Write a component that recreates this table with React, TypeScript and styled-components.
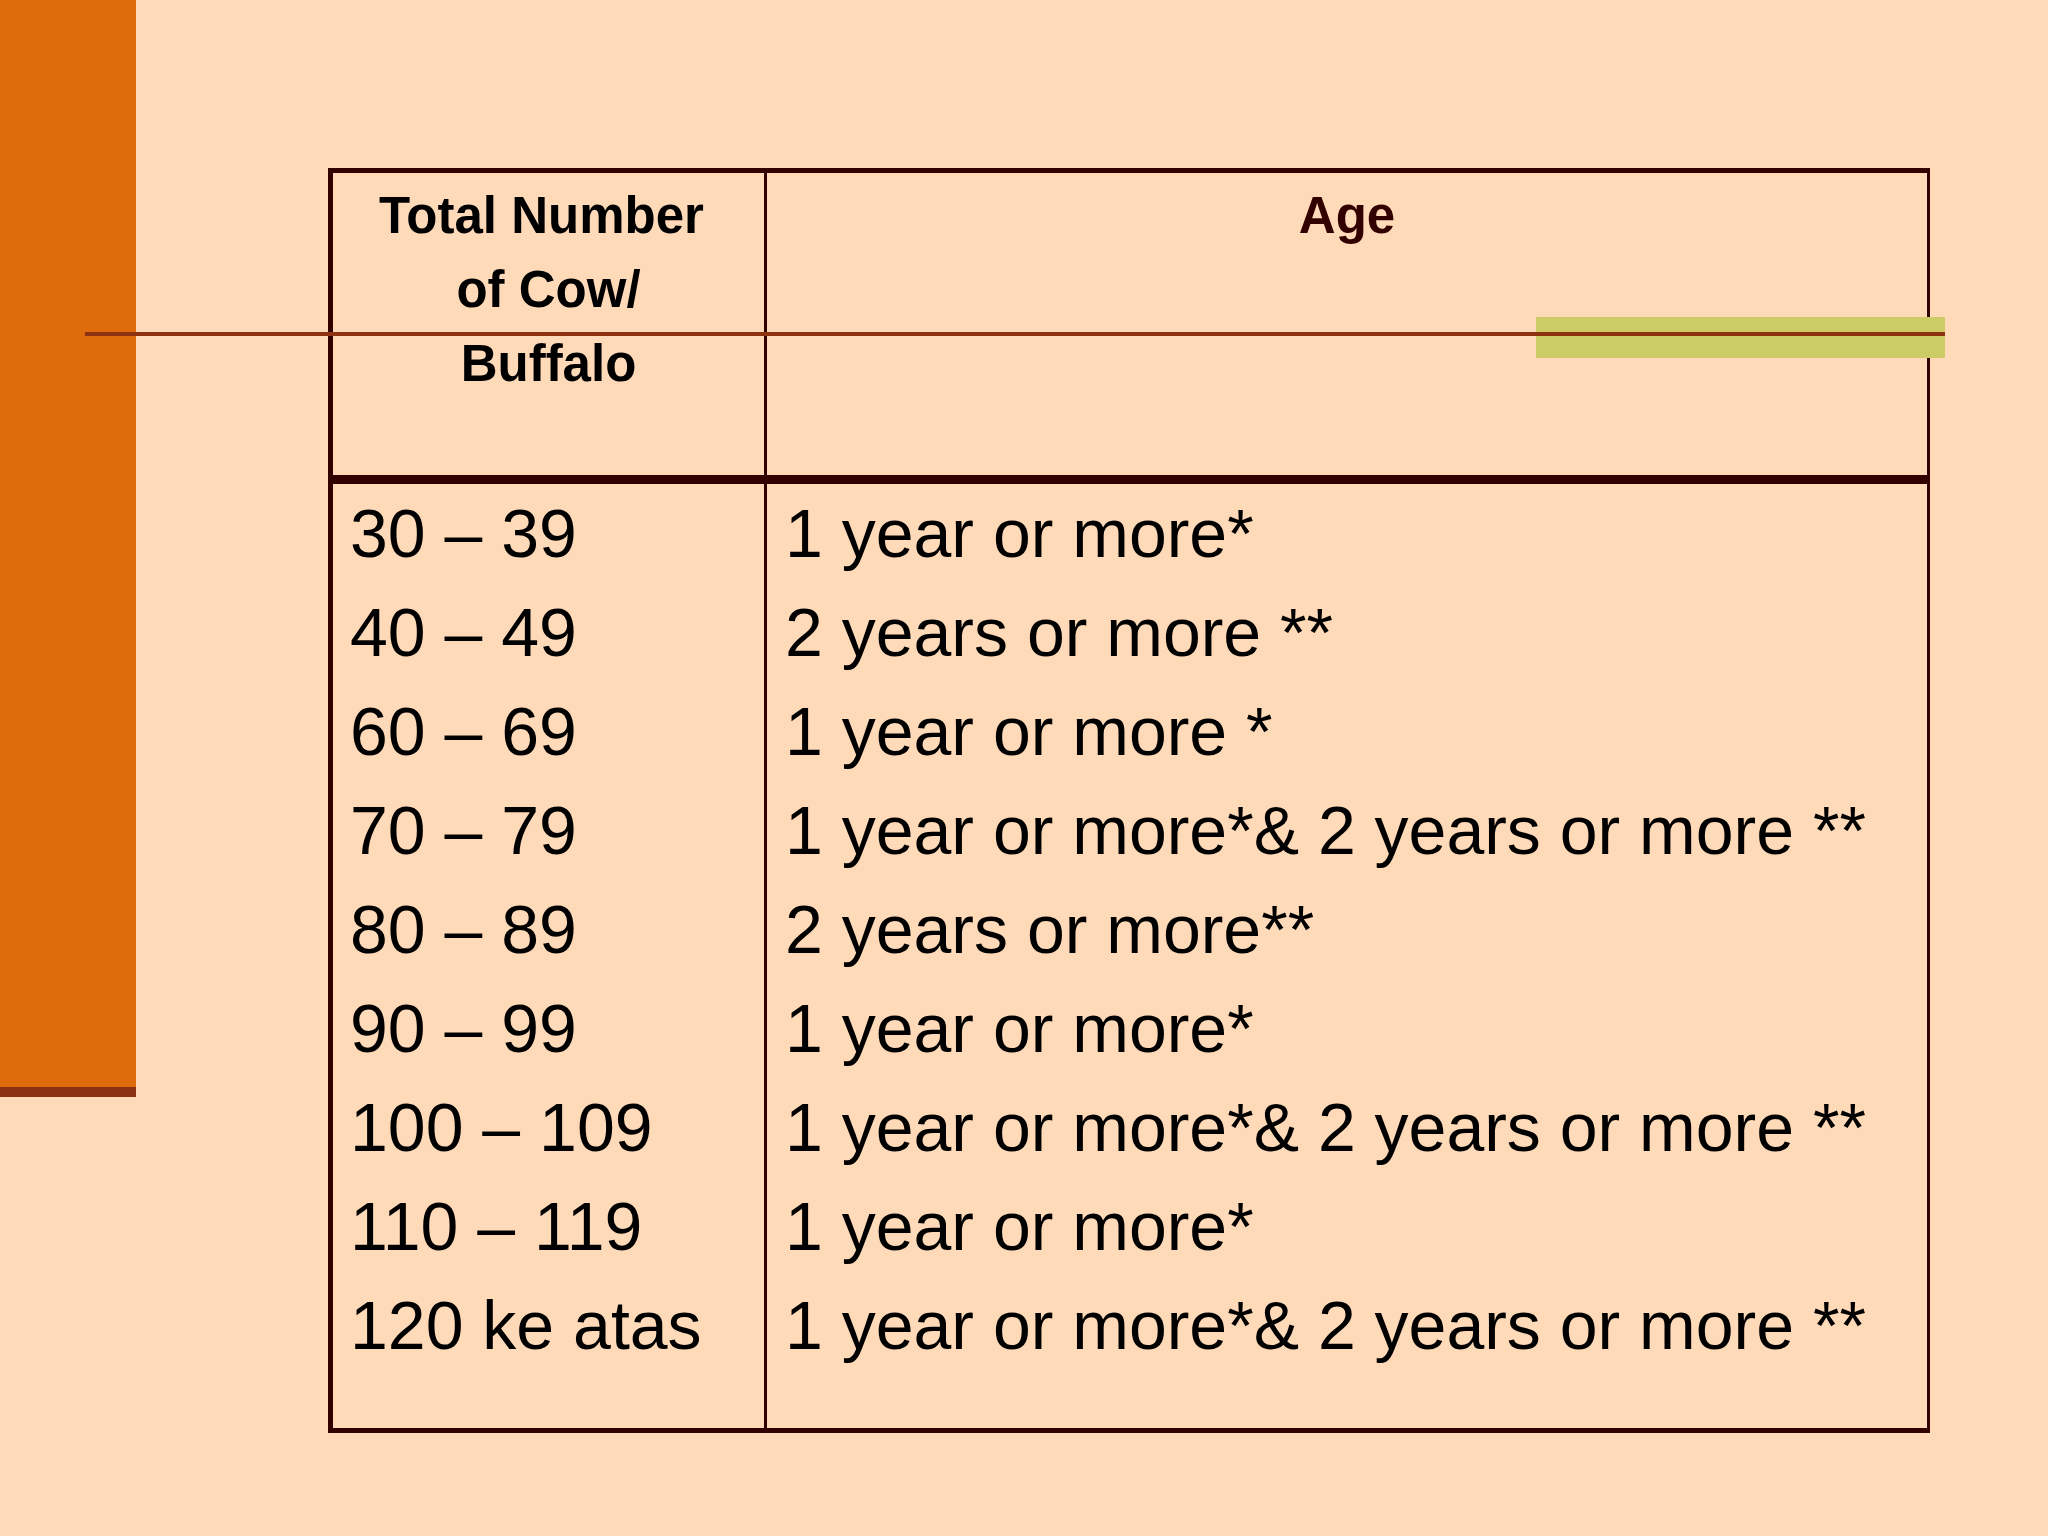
import React from "react";
import styled, { createGlobalStyle } from "styled-components";

const ranges = [
  "30 – 39",
  "40 – 49",
  "60 – 69",
  "70 – 79",
  "80 – 89",
  "90 – 99",
  "100 – 109",
  "110 – 119",
  "120 ke atas",
];

const ages = [
  "1 year or more*",
  "2 years or more **",
  "1 year or more *",
  "1 year or more*& 2 years or more **",
  "2 years or more**",
  "1 year or more*",
  "1 year or more*& 2 years or more **",
  "1 year or more*",
  "1 year or more*& 2 years or more **",
];

const App = () => {
  return (
    <Slide>
      <GlobalStyle />
      <SideBar />
      <Main>
        <Table>
          <HeaderRow>
            <HeaderCell $divider>
              {"Total Number\u00a0"}
              <br />
              of Cow/
              <br />
              Buffalo
            </HeaderCell>
            <HeaderCell $tone="#330000">Age</HeaderCell>
          </HeaderRow>
          <Body>
            <BodyColumn $divider>
              {ranges.map((r) => (
                <Line key={r}>{r}</Line>
              ))}
            </BodyColumn>
            <BodyColumn>
              {ages.map((a, i) => (
                <Line key={i}>{a}</Line>
              ))}
            </BodyColumn>
          </Body>
        </Table>
      </Main>
      <Accent />
      <Rule />
    </Slide>
  );
};

const GlobalStyle = createGlobalStyle`
  html, body {
    margin: 0;
    padding: 0;
    background: #ffdab9;
  }
  * {
    box-sizing: border-box;
  }
`;

const Slide = styled.div`
  position: relative;
  display: flex;
  align-items: flex-start;
  width: 2048px;
  height: 1536px;
  overflow: hidden;
  background: #ffdab9;
  font-family: "Liberation Sans", Arial, sans-serif;
  color: #000;
`;

const SideBar = styled.div`
  flex: none;
  width: 136px;
  height: 1097px;
  background: #df6c0c;
  border-bottom: 10px solid #8c3214;
`;

const Main = styled.div`
  padding: 168px 0 0 192px;
`;

const Table = styled.div`
  width: 1602px;
  border-top: 5px solid #330000;
  border-left: 5px solid #330000;
  border-bottom: 5px solid #330000;
  border-right: 3px solid #330000;
`;

const HeaderRow = styled.div`
  display: grid;
  grid-template-columns: 434px 1fr;
  height: 311px;
  border-bottom: 9px solid #330000;
`;

const HeaderCell = styled.div<{ $divider?: boolean; $tone?: string }>`
  padding-top: 6px;
  text-align: center;
  font-size: 51px;
  font-weight: 700;
  line-height: 74px;
  color: ${(p) => p.$tone || "#000"};
  border-right: ${(p) => (p.$divider ? "3px solid #330000" : "none")};
`;

const Body = styled.div`
  display: grid;
  grid-template-columns: 434px 1fr;
`;

const BodyColumn = styled.div<{ $divider?: boolean }>`
  display: flex;
  flex-direction: column;
  padding: 0 0 53px ${(p) => (p.$divider ? "17px" : "18px")};
  border-right: ${(p) => (p.$divider ? "3px solid #330000" : "none")};
`;

const Line = styled.div`
  font-size: 68px;
  line-height: 99px;
  white-space: nowrap;
`;

const Accent = styled.div`
  position: absolute;
  left: 1536px;
  top: 317px;
  width: 409px;
  height: 41px;
  background: #cccc66;
`;

const Rule = styled.div`
  position: absolute;
  left: 85px;
  top: 332px;
  width: 1860px;
  height: 4px;
  background: #8e3312;
`;

export default App;
